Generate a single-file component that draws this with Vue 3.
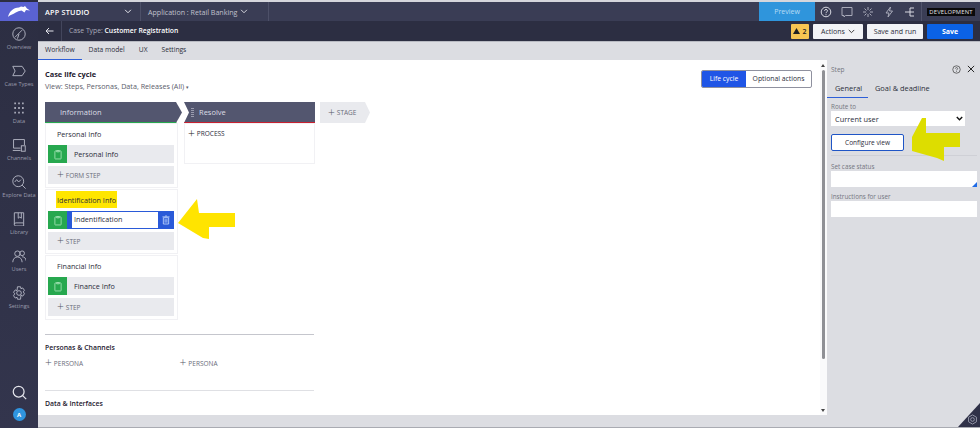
<template>
  <div class="app">
    <aside class="sidebar">
      <div class="logo">
        <svg width="22" height="11" viewBox="0 0 22 11"><path d="M0 11C1 6 5 1.500 11 1.500L13 .5 15.500 1 17 0 19 2.500 22 4.500 18 4 16.500 6.500 13.500 4.500C9 5 6 8 4 8.500 2.500 9 1 10 0 11Z" fill="#fff"/></svg>
      </div>
      <nav class="nav">
        <div v-for="item in navItems" :key="item.label" class="nav-item">
          <svg width="14" height="14" viewBox="0 0 18 18" fill="none" stroke="#b4b6c4" stroke-width="1.200" v-html="item.icon"></svg>
          <span>{{ item.label }}</span>
        </div>
      </nav>
      <div class="side-bottom">
        <svg width="15" height="15" viewBox="0 0 18 18" fill="none" stroke="#e4e5ec" stroke-width="1.500"><circle cx="8" cy="8" r="6.500"/><path d="M12.500 12.500L17 17"/></svg>
        <div class="avatar">A</div>
      </div>
    </aside>

    <div class="main">
      <header class="topbar">
        <div class="studio">APP STUDIO
          <svg class="chev" width="8" height="5" viewBox="0 0 9 6"><path d="M1 1l3.500 3.500L8 1" fill="none" stroke="#e4e5ec" stroke-width="1.200"/></svg>
        </div>
        <div class="application">Application : Retail Banking
          <svg width="8" height="5" viewBox="0 0 9 6"><path d="M1 1l3.500 3.500L8 1" fill="none" stroke="#d5d6de" stroke-width="1.200"/></svg>
        </div>
        <div class="spacer"></div>
        <div class="preview">Preview</div>
        <div class="top-icons">
          <svg width="12" height="12" viewBox="0 0 12 12" fill="none" stroke="#d8d9e2"><circle cx="6" cy="6" r="4.800"/><path d="M4.500 4.800C4.500 3 7.500 3 7.500 4.800 7.500 6 6 5.800 6 7.200M6 8.200v1"/></svg>
          <svg width="12" height="12" viewBox="0 0 12 12" fill="none" stroke="#a9abba"><path d="M1 1.500h10v8H4.500L3 11V9.500H1Z"/></svg>
          <svg width="12" height="12" viewBox="0 0 12 12" fill="none" stroke="#a9abba"><path d="M6 1v3M6 8v3M1 6h3M8 6h3M2.500 2.500l2 2M7.500 7.500l2 2M9.500 2.500l-2 2M4.500 7.500l-2 2"/></svg>
          <svg width="12" height="12" viewBox="0 0 12 12" fill="none" stroke="#a9abba"><path d="M7.500 1L3 7h3l-1 4 4.500-6h-3Z"/></svg>
          <svg width="12" height="12" viewBox="0 0 12 12" fill="none" stroke="#d8d9e2"><path d="M1 6h5M6 2v8M6 2h4M6 6h4M6 10h4"/></svg>
        </div>
        <div class="env"><span>DEVELOPMENT</span></div>
      </header>

      <div class="subbar">
        <svg class="back" width="9" height="8" viewBox="0 0 9 8"><path d="M8.500 4H1M4 1L1 4l3 3" fill="none" stroke="#e4e5ec"/></svg>
        <div class="case-type">Case Type: <b>Customer Registration</b></div>
        <div class="spacer"></div>
        <div class="warn">
          <svg width="7" height="6" viewBox="0 0 7 6"><path d="M3.500 0L7 6H0Z" fill="#222"/></svg>
          2
        </div>
        <button class="btn">Actions
          <svg width="7" height="5" viewBox="0 0 9 6"><path d="M1 1l3.500 3.500L8 1" fill="none" stroke="#333" stroke-width="1.200"/></svg>
        </button>
        <button class="btn run">Save and run</button>
        <button class="btn save">Save</button>
      </div>

      <div class="tabs">
        <div v-for="(t, i) in tabs" :key="t" class="tab" :class="{ active: i === 0 }">{{ t }}</div>
      </div>

      <div class="body">
        <section class="canvas">
          <div class="canvas-head">
            <div>
              <h2>Case life cycle</h2>
              <p class="view">View: Steps, Personas, Data, Releases (All) <small>▾</small></p>
            </div>
            <div class="toggle">
              <span class="on">Life cycle</span>
              <span>Optional actions</span>
            </div>
          </div>

          <div class="stages">
            <div class="col-info">
              <div class="stage first">Information</div>
              <div v-for="p in processes" :key="p.title" class="card">
                <div class="card-title"><span :class="{ marked: p.marked }">{{ p.title }}</span></div>
                <div class="step" :class="{ selected: p.selected }">
                  <div class="step-icon">
                    <svg width="8" height="11" viewBox="0 0 9 12" fill="none" stroke="#9fe0b2"><rect x="1" y="2" width="7" height="9" rx=".5"/><path d="M3 1.500h3v1.500H3Z"/></svg>
                  </div>
                  <template v-if="p.selected">
                    <div class="step-input">{{ p.step }}</div>
                    <div class="step-trash">
                      <svg width="8" height="10" viewBox="0 0 9 11" fill="none" stroke="#bcd2fb"><path d="M1.500 3h6v7h-6ZM.5 2h8M3.500 1h2M3.500 4.500v4M5.500 4.500v4"/></svg>
                    </div>
                  </template>
                  <span v-else class="step-name">{{ p.step }}</span>
                </div>
                <div class="add-step"><i class="plus">+</i>{{ p.add }}</div>
              </div>
            </div>

            <div class="col-resolve">
              <div class="stage second">
                <span class="grip"></span>Resolve
              </div>
              <div class="resolve-card"><i class="plus dark">+</i>PROCESS</div>
            </div>

            <div class="stage add"><i class="plus">+</i>STAGE</div>
          </div>

          <div class="lower">
            <h3>Personas &amp; Channels</h3>
            <div class="personas">
              <span><i class="plus">+</i>PERSONA</span>
              <span><i class="plus">+</i>PERSONA</span>
            </div>
          </div>
          <div class="lower data">
            <h3>Data &amp; Interfaces</h3>
          </div>
        </section>

        <div class="scroll">
          <span class="arrow-up"></span>
          <span class="thumb"></span>
          <span class="arrow-down"></span>
        </div>

        <aside class="panel">
          <div class="panel-head">
            <span>Step</span>
            <svg width="9" height="9" viewBox="0 0 12 12" fill="none" stroke="#444"><circle cx="6" cy="6" r="5"/><path d="M4.500 4.800C4.500 3 7.500 3 7.500 4.800 7.500 6 6 5.800 6 7.200M6 8.200v1"/></svg>
            <svg width="8" height="8" viewBox="0 0 9 9" fill="none" stroke="#222" stroke-width="1.100"><path d="M1 1l7 7M8 1L1 8"/></svg>
          </div>
          <div class="panel-tabs">
            <span class="active">General</span>
            <span>Goal &amp; deadline</span>
          </div>
          <div class="panel-form">
            <label>Route to</label>
            <div class="select">Current user
              <svg width="7" height="5" viewBox="0 0 9 6"><path d="M1 1l3.500 3.500L8 1" fill="none" stroke="#111" stroke-width="1.800"/></svg>
            </div>
            <button class="configure">Configure view</button>
            <div class="rule"></div>
            <label>Set case status</label>
            <div class="field tall"><span class="corner"></span></div>
            <label class="second-label">Instructions for user</label>
            <div class="field"></div>
          </div>
        </aside>
      </div>

      <div class="bottom"></div>
    </div>

    <!-- markup drawn over the screenshot -->
    <svg class="arrow" width="980" height="428" viewBox="0 0 980 428">
      <path d="M178 223L197 199 199 213H235V227H209V239L203 238Z" fill="#ffe400"/>
      <path d="M922 118H926V133H960V147H944V161L937 158 912 151V137Z" fill="#dddd00"/>
    </svg>
    <div class="corner-gear">
      <svg width="11" height="11" viewBox="0 0 12 12" fill="none" stroke="#9a9cae"><circle cx="6" cy="6" r="2"/><path d="M6 1l4.300 2.500v5L6 11 1.700 8.500v-5Z"/></svg>
    </div>
  </div>
</template>

<script setup>
const navItems = [
  { label: 'Overview', icon: '<circle cx="9" cy="9" r="8"/><path d="M4 13l9-9M9 9l-2 6"/>' },
  { label: 'Case Types', icon: '<path d="M1 3h12l4 6-4 6H1l3-6Z"/>' },
  { label: 'Data', icon: '<path d="M3 3h2M8 3h2M13 3h2M3 9h2M8 9h2M13 9h2M3 15h2M8 15h2M13 15h2" stroke-width="2.400"/>' },
  { label: 'Channels', icon: '<path d="M11 13H2V2h14v7"/><path d="M1 16h10"/><rect x="12" y="10" width="5" height="7"/>' },
  { label: 'Explore Data', icon: '<circle cx="8" cy="8" r="7"/><path d="M13 13l4.500 4.500M3.500 9l2.500-3 2.500 3 3-3"/>' },
  { label: 'Library', icon: '<path d="M3 1h12v13H5A2 2 0 0 0 3 16ZM3 16A2 2 0 0 0 5 18H15V14M8 1v7l2-1.500L12 8V1"/>' },
  { label: 'Users', icon: '<circle cx="7" cy="6" r="3.500"/><circle cx="13" cy="5.500" r="3"/><path d="M1 17c0-9 12-9 12 0M13 10c3 0 5 2 5 5"/>' },
  { label: 'Settings', icon: '<circle cx="9" cy="9" r="3"/><path d="M7 1h4l.5 2.500 2.300-1 2.200 3-1.500 2 1.500 2.500-2.200 3-2.300-1L11 17H7l-.5-2.500-2.300 1-2.200-3 1.500-2.500-1.500-2 2.200-3 2.300 1Z"/>' }
]

const tabs = ['Workflow', 'Data model', 'UX', 'Settings']

const processes = [
  { title: 'Personal Info', step: 'Personal Info', add: 'FORM STEP' },
  { title: 'Identification Info', step: 'Indentification', add: 'STEP', selected: true, marked: true },
  { title: 'Financial Info', step: 'Finance Info', add: 'STEP' }
]
</script>

<style>
html, body {
  margin: 0;
  background: #fff;
}
</style>

<style scoped>
* {
  box-sizing: border-box;
}
.app {
  position: relative;
  display: flex;
  width: 980px;
  height: 428px;
  overflow: hidden;
  font-family: "Open Sans", "Noto Sans", sans-serif;
  font-size: 8px;
  color: #2b2d3a;
}
.sidebar {
  display: flex;
  flex-direction: column;
  align-items: stretch;
  width: 38px;
  background: linear-gradient(#2c2e42, #33354d);
}
.logo {
  display: flex;
  align-items: center;
  justify-content: center;
  height: 19px;
  margin-top: 2px;
  background: #5a62d2;
}
.nav {
  display: flex;
  flex-direction: column;
  padding-top: 5px;
}
.nav-item {
  display: flex;
  flex-direction: column;
  align-items: center;
  height: 37px;
  padding-top: 1px;
  gap: 2px;
  font-size: 5.600px;
  line-height: 8px;
  color: #9b9dae;
  white-space: nowrap;
}
.side-bottom {
  display: flex;
  flex-direction: column;
  align-items: center;
  margin-top: auto;
  padding-bottom: 7px;
  gap: 8px;
}
.avatar {
  display: flex;
  align-items: center;
  justify-content: center;
  width: 13px;
  height: 13px;
  border-radius: 50%;
  background: #2f95e0;
  color: #fff;
  font-size: 6px;
  font-weight: 700;
}
.main {
  display: flex;
  flex-direction: column;
  flex: 1;
  min-width: 0;
}
.topbar {
  display: flex;
  align-items: center;
  height: 21px;
  border-top: 2px solid #d5d6dc;
  background: #3a3d55;
  color: #fff;
}
.studio {
  display: flex;
  align-items: center;
  justify-content: space-between;
  width: 103px;
  height: 100%;
  padding: 0 8px 0 7px;
  border-right: 1px solid #4d5068;
  font-size: 7.300px;
  font-weight: 600;
  letter-spacing: .2px;
}
.application {
  display: flex;
  align-items: center;
  gap: 3px;
  width: 128px;
  height: 100%;
  padding-left: 7px;
  border-right: 1px solid #4d5068;
  font-size: 7.100px;
  color: #c0c1cd;
}
.spacer {
  flex: 1;
}
.preview {
  display: flex;
  align-items: center;
  justify-content: center;
  width: 56px;
  height: 100%;
  background: #2f95dc;
  color: #b9dcf4;
  font-size: 7px;
}
.top-icons {
  display: flex;
  align-items: center;
  gap: 9px;
  height: 100%;
  padding: 0 5px 0 5px;
  border-right: 1px solid #50536b;
}
.env {
  display: flex;
  justify-content: center;
  width: 58px;
}
.env span {
  padding: 0 2px;
  background: #0a0a0c;
  color: #e4e4e8;
  font-size: 5.800px;
  line-height: 8px;
  letter-spacing: .2px;
}
.subbar {
  display: flex;
  align-items: center;
  height: 20px;
  padding-right: 7px;
  background: #2c2e42;
  color: #fff;
}
.back {
  margin-left: 7px;
  margin-right: 7px;
}
.case-type {
  height: 100%;
  padding-left: 7px;
  border-left: 1px solid #43465c;
  color: #a9abb9;
  font-size: 6.800px;
  line-height: 20px;
}
.case-type b {
  color: #fff;
  font-weight: 600;
}
.warn {
  display: flex;
  align-items: center;
  justify-content: center;
  gap: 2px;
  width: 18px;
  height: 15px;
  margin-right: 4px;
  border-radius: 1px;
  background: #f7c552;
  color: #222;
  font-size: 7px;
  font-weight: 600;
}
.btn {
  display: flex;
  align-items: center;
  justify-content: center;
  gap: 3px;
  width: 50px;
  height: 15px;
  margin-right: 4px;
  padding: 0;
  border: 0;
  border-radius: 1px;
  background: #f2f3f6;
  color: #2b2d3a;
  font-family: inherit;
  font-size: 7px;
}
.run {
  width: 56px;
}
.save {
  width: 46px;
  margin-right: 0;
  background: #0b62e6;
  color: #fff;
  font-weight: 700;
}
.tabs {
  display: flex;
  height: 19px;
  background: #dcdde2;
  border-top: 1px solid #b8bac2;
}
.tab {
  padding: 0 7px;
  line-height: 16px;
  font-size: 6.700px;
}
.tab.active {
  border-bottom: 1px solid #2e5fd8;
}
.body {
  display: flex;
  flex: 1;
  min-height: 0;
}
.canvas {
  flex: 1;
  min-width: 0;
  padding: 9px 8px 0 7px;
  background: #fff;
}
.canvas-head {
  display: flex;
  justify-content: space-between;
  align-items: flex-start;
  height: 33px;
}
h2 {
  margin: 0;
  font-size: 7.400px;
  line-height: 11px;
  font-weight: 700;
  color: #1f2030;
}
.view {
  margin: 0;
  font-size: 7.200px;
  line-height: 12px;
  color: #5b5d6b;
}
.view small {
  font-size: 5px;
}
.toggle {
  display: flex;
  height: 18px;
  margin-top: 1px;
  border: 1px solid #8f919f;
  border-radius: 2px;
  overflow: hidden;
  font-size: 6.800px;
  line-height: 16px;
}
.toggle span {
  width: 65px;
  text-align: center;
}
.toggle .on {
  width: 44px;
  background: #1f55e6;
  color: #fff;
}
.stages {
  display: flex;
  align-items: flex-start;
  height: 232px;
}
.col-info {
  width: 139px;
}
.col-resolve {
  width: 131px;
  margin-right: 5px;
}
.stage {
  display: flex;
  align-items: center;
  height: 21px;
  background: #53566f;
  color: #dcdde5;
  font-size: 7.500px;
}
.first {
  width: 137px;
  padding-left: 15px;
  border-bottom: 1px solid #27a84f;
  clip-path: polygon(0 0, 131px 0, 137px 50%, 131px 100%, 0 100%);
}
.second {
  padding-left: 5px;
  border-bottom: 1px solid #c8202f;
  clip-path: polygon(0 0, 100% 0, 100% 100%, 0 100%, 5px 50%);
}
.grip {
  width: 3px;
  height: 9px;
  margin: 0 5px 0 2px;
  background: repeating-linear-gradient(#9a9cae 0 1px, transparent 1px 2px);
}
.add {
  width: 50px;
  padding-left: 8px;
  background: #e9eaee;
  color: #6a6c7a;
  font-size: 6.500px;
  clip-path: polygon(0 0, 45px 0, 50px 50%, 45px 100%, 0 100%);
}
.plus {
  margin-right: 2px;
  color: #555766;
  font-size: 12px;
  font-style: normal;
  font-weight: 300;
  line-height: 1;
}
.plus.dark {
  color: #222;
}
.card {
  width: 133px;
  height: 65px;
  padding: 0 3px 0 2px;
  border: 1px solid #f1f1f4;
}
.card + .card {
  margin-top: 1px;
}
.card-title {
  height: 21px;
  padding-left: 9px;
  font-size: 7.200px;
  line-height: 20px;
}
.marked {
  padding: 4px 1px 3px 1px;
  margin-left: -1px;
  background: #ffe600;
}
.step {
  display: flex;
  align-items: center;
  height: 18px;
  background: #e9eaee;
  font-size: 7.200px;
}
.step-icon {
  display: flex;
  align-items: center;
  justify-content: center;
  flex: none;
  width: 19px;
  height: 100%;
  background: #27a84f;
}
.step-name {
  padding-left: 7px;
}
.selected {
  background: #2a5ad8;
}
.step-input {
  flex: 1;
  height: 16px;
  margin-left: 5px;
  padding-left: 2px;
  background: #fff;
  line-height: 15px;
}
.step-trash {
  display: flex;
  align-items: center;
  justify-content: center;
  width: 16px;
}
.add-step {
  display: flex;
  align-items: center;
  height: 18px;
  margin-top: 3px;
  padding-left: 9px;
  background: #e9eaee;
  color: #6a6c7a;
  font-size: 6.500px;
}
.resolve-card {
  display: flex;
  align-items: center;
  height: 41px;
  padding: 0 0 20px 3px;
  border: 1px solid #f1f1f4;
  font-size: 6.500px;
}
.lower {
  width: 269px;
  height: 56px;
  padding-top: 8px;
  border-top: 1px solid #c5c6cd;
}
.lower.data {
  border-top-color: #dfe0e4;
  height: 25px;
  padding-top: 8px;
}
h3 {
  margin: 0;
  font-size: 6.900px;
  line-height: 10px;
  font-weight: 600;
  color: #1f2030;
}
.personas {
  display: flex;
  margin-top: 4px;
  color: #6a6c7a;
  font-size: 6.500px;
}
.personas span {
  display: flex;
  align-items: center;
  width: 138px;
}
.scroll {
  position: relative;
  width: 7px;
  background: #fafafb;
}
.thumb {
  position: absolute;
  top: 10px;
  left: 2px;
  width: 3px;
  height: 289px;
  background: #8f9095;
  border-radius: 2px;
}
.arrow-up,
.arrow-down {
  position: absolute;
  left: 1px;
  width: 0;
  height: 0;
  border-left: 2.500px solid transparent;
  border-right: 2.500px solid transparent;
}
.arrow-up {
  top: 4px;
  border-bottom: 3px solid #444;
}
.arrow-down {
  bottom: 3px;
  border-top: 3px solid #444;
}
.panel {
  width: 153px;
  background: #dcdde2;
}
.panel-head {
  display: flex;
  align-items: center;
  gap: 6px;
  height: 16px;
  margin-top: 1px;
  padding: 0 5px 0 4px;
  font-size: 6.500px;
  color: #74767f;
}
.panel-head span {
  margin-right: auto;
}
.panel-tabs {
  display: flex;
  height: 25px;
  padding-top: 5px;
  font-size: 7.400px;
  line-height: 12px;
}
.panel-tabs span {
  padding: 0 7px;
}
.panel-tabs .active {
  width: 41px;
  height: 16px;
  padding: 0 0 0 8px;
  border-bottom: 1px solid #2e5fd8;
}
.panel-form {
  display: flex;
  flex-direction: column;
  align-items: flex-start;
  padding: 0 3px 0 4px;
}
label {
  font-size: 6.300px;
  line-height: 9px;
  color: #74767f;
}
.select {
  display: flex;
  align-items: center;
  justify-content: space-between;
  width: 134px;
  height: 15px;
  padding: 0 2px 0 4px;
  background: #fff;
  font-size: 7.400px;
}
.configure {
  width: 73px;
  height: 17px;
  margin-top: 8px;
  padding: 0;
  border: 1px solid #1f55c6;
  border-radius: 2px;
  background: #fff;
  color: #2b2d3a;
  font-family: inherit;
  font-size: 6.500px;
}
.rule {
  width: 100%;
  height: 1px;
  margin: 4px 0 6px;
  background: #cfd0d6;
}
.field {
  position: relative;
  width: 146px;
  height: 16px;
  background: #fff;
}
.second-label {
  margin-top: 5px;
}
.corner {
  position: absolute;
  right: 0;
  bottom: 0;
  border-left: 5px solid transparent;
  border-bottom: 5px solid #1f6be6;
}
.bottom {
  height: 13px;
  background: #dcdde2;
  border-bottom: 1px solid #a9abb2;
}
.arrow {
  position: absolute;
  top: 0;
  left: 0;
  pointer-events: none;
}
.corner-gear {
  position: absolute;
  right: 0;
  bottom: 1px;
  display: flex;
  align-items: flex-end;
  justify-content: flex-end;
  width: 22px;
  height: 24px;
  padding: 0 2px 2px 0;
  background: #2f3148;
  clip-path: polygon(100% 0, 100% 100%, 0 100%);
}
</style>
